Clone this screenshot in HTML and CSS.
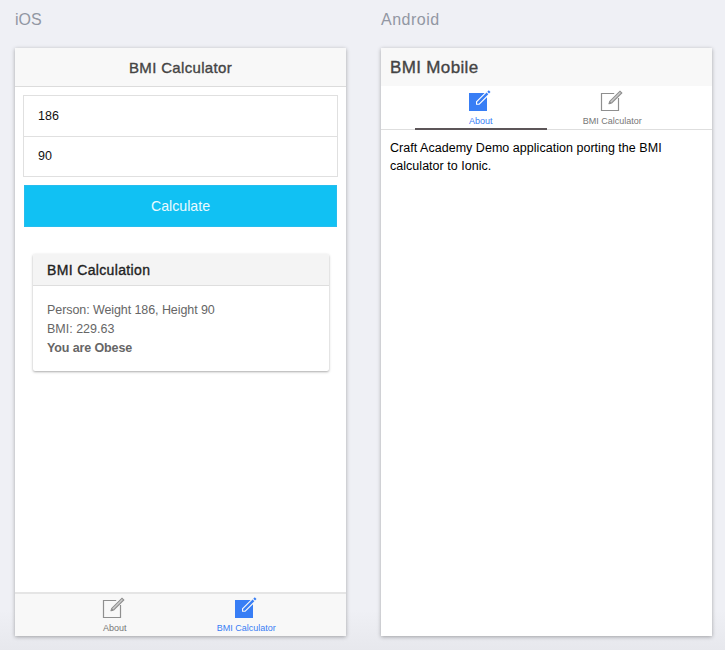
FILE: index.html
```html
<!DOCTYPE html>
<html lang="en">
<head>
<meta charset="utf-8">
<title>BMI Calculator</title>
<link rel="stylesheet" href="styles.css">
</head>
<body>
<svg class="defs" aria-hidden="true">
  <symbol id="compose" viewBox="0 0 24 24">
    <path d="M15.2 4.5H2.5V21.5H19.5V9" fill="none" stroke="currentColor" stroke-width="1.2"/>
    <path d="M10.3 14.5L10.9 12.2L21 2.2L22.8 4L12.7 13.9Z" fill="#ccc" stroke="currentColor" stroke-width="1.1"/>
    <path d="M10 14.8L10.6 12.8L12 14.2Z" fill="currentColor" stroke="currentColor"/>
  </symbol>
  <symbol id="compose-filled" viewBox="0 0 24 24">
    <path d="M2 4H17.6L9 12.5V15.8H12.4L20 8.2V22H2Z" fill="currentColor"/>
    <path d="M10.1 14.7V13L19.6 3.5L21.3 5.2L11.8 14.7Z" fill="currentColor"/>
    <path d="M20.3 2.8L21.8 1.3L23.5 3L22 4.5Z" fill="currentColor"/>
  </symbol>
</svg>
<main class="previews">
  <section class="preview">
    <h2 class="platform ios-name">iOS</h2>
    <div class="phone">
      <header class="bar bar-ios">BMI Calculator</header>
      <div class="content">
        <div class="fields">
          <div class="field">186</div>
          <div class="field">90</div>
        </div>
        <div class="button">Calculate</div>
        <article class="card">
          <h3 class="card-title">BMI Calculation</h3>
          <div class="card-body">
            <div class="person">Person: Weight 186, Height 90</div>
            <div>BMI: 229.63</div>
            <div class="verdict">You are Obese</div>
          </div>
        </article>
      </div>
      <nav class="tabs tabs-ios">
        <div class="tab"><svg class="icon"><use href="#compose"/></svg><span>About</span></div>
        <div class="tab active"><svg class="icon"><use href="#compose-filled"/></svg><span>BMI Calculator</span></div>
      </nav>
    </div>
  </section>
  <section class="preview">
    <h2 class="platform android-name">Android</h2>
    <div class="phone">
      <header class="bar bar-android">BMI Mobile</header>
      <nav class="tabs tabs-android">
        <div class="tab active"><svg class="icon"><use href="#compose-filled"/></svg><span>About</span></div>
        <div class="tab"><svg class="icon"><use href="#compose"/></svg><span>BMI Calculator</span></div>
      </nav>
      <p class="about">Craft Academy Demo application porting the BMI<br>calculator to Ionic.</p>
    </div>
  </section>
</main>
</body>
</html>
```
FILE: styles.css
```css
* { box-sizing: border-box; }
body {
  margin: 0;
  height: 650px;
  overflow: hidden;
  background: linear-gradient(#eff0f5 0, #eff0f5 610px, #e7e8ed 650px);
  font-family: "Liberation Sans", Arial, sans-serif;
}
.defs { display: none; }
.previews { display: flex; gap: 35px; padding: 0 0 0 15px; }
.preview { width: 331px; }
.platform {
  margin: 0;
  height: 48px;
  padding-top: 10px;
  font-size: 16px;
  line-height: 19px;
  font-weight: 400;
  color: #9297a3;
}
.android-name { letter-spacing: .5px; }
.phone {
  display: flex;
  flex-direction: column;
  height: 588px;
  background: #fff;
  box-shadow: 0 1px 4px rgba(0, 0, 0, .32);
}
.bar {
  background: #f8f8f8;
  color: #444;
  -webkit-text-stroke: .35px #444;
}
.bar-ios {
  height: 39px;
  border-bottom: 1px solid #dcdcdc;
  text-align: center;
  font-size: 15px;
  letter-spacing: .33px;
  line-height: 39px;
}
.bar-android {
  height: 38px;
  padding-left: 9px;
  font-size: 17px;
  letter-spacing: .35px;
  line-height: 39px;
}
.content { flex: 1; padding: 8px 8px 0; }
.fields { height: 82px; border: 1px solid #e0e0e0; }
.field {
  height: 40px;
  padding-left: 14px;
  font-size: 12.5px;
  line-height: 40px;
  color: #111;
}
.field + .field { border-top: 1px solid #e0e0e0; line-height: 39px; }
.button {
  height: 42px;
  margin: 8px 1px 0;
  background: #11c1f3;
  box-shadow: inset 0 0 0 1px #27bdee;
  color: #e9faff;
  text-align: center;
  font-size: 14.2px;
  line-height: 42px;
}
.card {
  height: 117px;
  margin: 27px 9.5px 0;
  border-radius: 2px;
  box-shadow: 0 1px 2.5px rgba(0, 0, 0, .34);
  overflow: hidden;
}
.card-title {
  height: 32px;
  margin: 0;
  padding-left: 14.5px;
  border-bottom: 1px solid #dedede;
  background: #f4f4f4;
  color: #222;
  font-size: 14px;
  font-weight: 400;
  letter-spacing: .35px;
  line-height: 33px;
  -webkit-text-stroke: .35px #222;
}
.card-body {
  padding: 15px 14.5px 0;
  color: #666;
  font-size: 12.5px;
  line-height: 19.2px;
}
.person { letter-spacing: -.08px; }
.verdict { font-weight: 700; letter-spacing: -.12px; }
.tabs { display: flex; padding: 0 34px; color: #777; }
.tab {
  position: relative;
  display: flex;
  flex-direction: column;
  align-items: center;
  flex: 1;
  font-size: 9px;
  line-height: 10px;
}
.tab.active { color: #387ef5; }
.icon { display: block; width: 24px; height: 24px; margin: 0 3px 3px 0; color: #8f8f8f; }
.active .icon { color: #387ef5; }
.tabs-ios { height: 44px; border-top: 2px solid #e5e5e5; background: #f8f8f8; }
.tabs-ios .tab { padding-top: 2px; }
.tabs-android { height: 44px; border-bottom: 1px solid #dedede; }
.tabs-android .tab { padding-top: 3px; }
.tabs-android .active::after {
  content: "";
  position: absolute;
  right: 0;
  bottom: -1px;
  left: 0;
  height: 2px;
  background: #5c5558;
}
.about {
  margin: 9px 9px 0;
  color: #000;
  font-size: 12.5px;
  letter-spacing: .03px;
  line-height: 18px;
}
```
